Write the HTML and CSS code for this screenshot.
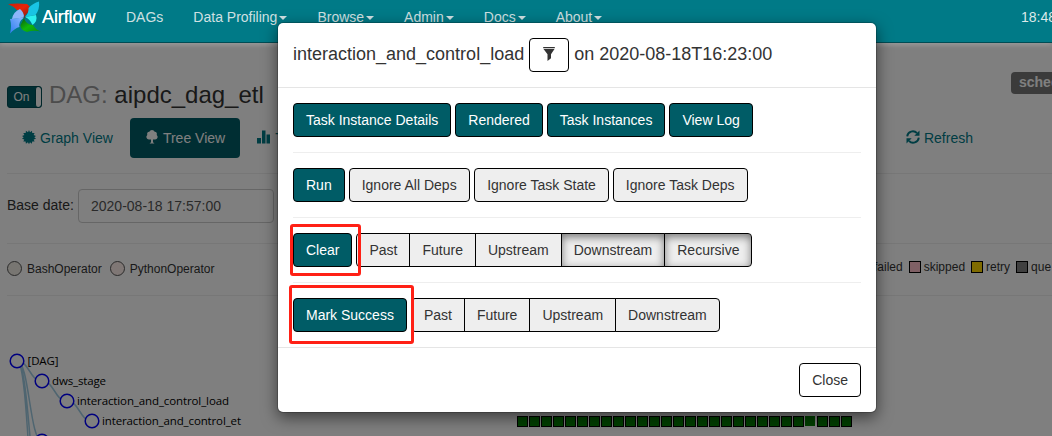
FILE: index.html
```html
<!DOCTYPE html>
<html lang="en">
<head>
<meta charset="utf-8">
<title>Airflow - DAG aipdc_dag_etl</title>
<link rel="stylesheet" href="styles.css">
</head>
<body>
<div class="page">
  <nav class="navbar">
    <a class="brand">
      <svg class="logo" width="34" height="34" viewBox="0 0 34 34">
        <defs>
          <linearGradient id="gr" x1="0" y1="0" x2="1" y2="1"><stop offset="0" stop-color="#c8200c"/><stop offset=".5" stop-color="#e82408"/><stop offset="1" stop-color="#7c1a18"/></linearGradient>
          <linearGradient id="gg" x1="0" y1="0" x2="1" y2="1"><stop offset="0" stop-color="#0b5a10"/><stop offset=".5" stop-color="#10b80c"/><stop offset="1" stop-color="#0a8a10"/></linearGradient>
          <linearGradient id="gb" x1="1" y1="0" x2="0" y2="1"><stop offset="0" stop-color="#8cb8ff"/><stop offset="1" stop-color="#2f7df0"/></linearGradient>
        </defs>
        <path fill="url(#gr)" d="M1 4Q10 3 20 4Q24 7 23 10L17 17Q16 9 10 10Q6 6 1 4Z"/>
        <path fill="#19c4e4" d="M32 1.500Q33 9 28.500 15L18 17Q22 13 21.500 8Q26 3 32 1.500Z"/>
        <path fill="#2cf0ee" d="M18 17L29 15Q31 21 25.500 25Q23 19 18 17Z"/>
        <path fill="url(#gg)" d="M34 31.500Q26 30 20 32Q13 30 13.500 25L17 18Q19 25 26 25Q29 30 34 31.500Z"/>
        <path fill="url(#gb)" d="M3 33.500Q5 26 3 19L17 17.500Q11 22 12.500 27Q8 28 3 33.500Z"/>
        <path fill="#8db6fa" d="M17 17.500L5 19Q6 12 13 9Q17 12 17 17.500Z"/>
        <circle cx="17.500" cy="17.300" r="1" fill="#444"/>
      </svg>
      <span>Airflow</span>
    </a>
    <a class="nav-link">DAGs</a>
    <a class="nav-link">Data Profiling<i class="caret"></i></a>
    <a class="nav-link">Browse<i class="caret"></i></a>
    <a class="nav-link">Admin<i class="caret"></i></a>
    <a class="nav-link">Docs<i class="caret"></i></a>
    <a class="nav-link">About<i class="caret"></i></a>
    <span class="clock">18:48</span>
  </nav>

  <main class="content">
    <header class="dag-head">
      <span class="toggle"><span class="toggle-on">On</span><span class="toggle-knob"></span></span>
      <h3 class="dag-title"><span class="muted">DAG:</span> aipdc_dag_etl</h3>
      <span class="schedule">sched</span>
    </header>
    <div class="pills">
      <a class="pill">
        <svg width="14" height="14" viewBox="0 0 14 14"><path fill="currentColor" d="M7 0l1 2.200L10 .7l.2 2.400 2.400-.2-1 2.200L14 6l-1.700 1.200L14 8.800l-2.300.6.9 2.200-2.400-.2-.3 2.400L8 12.300 7 14.200 5.900 12.300l-2 1.500-.3-2.400-2.300.2 1-2.200L0 8.800l1.700-1.600L0 6l2.400-.9-1.100-2.200 2.400.2L3.900.7 6 2.200z"/></svg>
        Graph View</a>
      <a class="pill active">
        <svg width="14" height="14" viewBox="0 0 14 14"><path fill="currentColor" d="M7 0a3 3 0 0 1 2.700 1.800 2.500 2.500 0 0 1 2 3.200 2.600 2.600 0 0 1-1.500 4.600H8v2.600l1.500 1.300h-5L6 12.200V9.600H3.900A2.600 2.600 0 0 1 2.300 5a2.500 2.500 0 0 1 2-3.200A3 3 0 0 1 7 0z"/></svg>
        Tree View</a>
      <a class="pill">
        <svg width="14" height="14" viewBox="0 0 14 14"><path fill="currentColor" d="M0 8h4v5.500H0zM5 .5h3.500v13H5zM9.500 4.500h3.500v9H9.500z"/></svg>
        T</a>
      <a class="refresh">
        <svg width="14" height="14" viewBox="0 0 14 14"><path fill="none" stroke="currentColor" stroke-width="1.900" d="M1.200 6.300A5.600 5.600 0 0 1 11 3.200M12.800 7.700A5.600 5.600 0 0 1 3 10.800"/><path fill="currentColor" d="M13.500.5v5.200H8.300zM.5 13.500V8.300h5.200z"/></svg>
        Refresh</a>
    </div>
    <form class="filters">
      <label>Base date:</label>
      <span class="input">2020-08-18 17:57:00</span>
    </form>
    <div class="legend">
      <span class="op"><i class="dot bash"></i>BashOperator</span>
      <span class="op"><i class="dot python"></i>PythonOperator</span>
      <div class="states">
        <span>failed</span>
        <span><i class="state skipped"></i>skipped</span>
        <span><i class="state retry"></i>retry</span>
        <span><i class="state queued"></i>que</span>
      </div>
    </div>
    <svg class="tree" width="1045" height="140" viewBox="7 296 1045 140">
      <g class="links">
        <path d="M17 361C29.500 361 29.500 381 42 381M42 381C54.500 381 54.500 401 67 401M67 401C79.500 401 79.500 421 92 421M17 361C29.500 361 29.500 441 42 441M17 361C29.500 361 29.500 501 42 501M17 361C29.500 361 29.500 561 42 561"/>
      </g>
      <g class="nodes">
        <circle cx="17" cy="361" r="6.800"/><circle cx="42" cy="381" r="6.800"/><circle cx="67" cy="401" r="6.800"/><circle cx="92" cy="421" r="6.800"/><circle cx="42" cy="441" r="6.800"/>
      </g>
      <g class="labels">
        <text x="27.500" y="365" textLength="31">[DAG]</text>
        <text x="52" y="385" textLength="54">dws_stage</text>
        <text x="77" y="405" textLength="152">interaction_and_control_load</text>
        <text x="102" y="425" textLength="139">interaction_and_control_et</text>
      </g>
      <g class="runs" id="runs"></g>
    </svg>
  </main>

  <div class="backdrop"></div>

  <section class="modal">
    <header class="modal-head">
      <span>interaction_and_control_load</span>
      <button class="btn plain filter"><svg width="14" height="14" viewBox="0 0 14 14"><path fill="currentColor" d="M1.200 0h11.600v1.300H1.200zM1.500 2h11L9 7.300V11.200L5.500 14V7.300z"/></svg></button>
      <span>on 2020-08-18T16:23:00</span>
    </header>
    <div class="modal-body">
      <div class="row">
        <button class="btn primary">Task Instance Details</button>
        <button class="btn primary">Rendered</button>
        <button class="btn primary">Task Instances</button>
        <button class="btn primary">View Log</button>
      </div>
      <hr>
      <div class="row">
        <button class="btn primary">Run</button>
        <button class="btn wide">Ignore All Deps</button>
        <button class="btn">Ignore Task State</button>
        <button class="btn">Ignore Task Deps</button>
      </div>
      <hr>
      <div class="row">
        <span class="marked"><button class="btn primary">Clear</button><i class="mark mark-clear"></i></span>
        <div class="group">
          <button class="btn">Past</button><button class="btn">Future</button><button class="btn">Upstream</button><button class="btn pressed">Downstream</button><button class="btn pressed">Recursive</button>
        </div>
      </div>
      <hr>
      <div class="row">
        <span class="marked"><button class="btn primary">Mark Success</button><i class="mark mark-success"></i></span>
        <div class="group">
          <button class="btn">Past</button><button class="btn">Future</button><button class="btn">Upstream</button><button class="btn">Downstream</button>
        </div>
      </div>
    </div>
    <footer class="modal-foot"><button class="btn plain">Close</button></footer>
  </section>
</div>
<script src="runs.js"></script>
</body>
</html>
```
FILE: styles.css
```css
* { box-sizing: border-box; }
body { margin: 0; font: 14px/20px "Liberation Sans", Arial, sans-serif; color: #333; background: #fff; }
.page { position: relative; width: 1052px; height: 436px; overflow: hidden; }

.navbar { position: relative; z-index: 2; display: flex; height: 43px; padding-left: 7px; background: #007a87; border-bottom: 1px solid #004c54; box-shadow: 0 2px 5px rgba(255,255,255,.22); white-space: nowrap; }
.brand { display: flex; width: 104px; color: #fff; font-size: 18px; line-height: 34px; text-shadow: 0 0 .5px #fff; }
.brand span { margin-left: 1px; letter-spacing: -.1px; }
.logo { flex: none; }
.nav-link { display: flex; padding: 7px 15px; color: #cfe0e2; }
.caret { width: 8px; height: 4px; margin: 9px 0 0 2px; border: 4px solid transparent; border-top-color: #cfe0e2; border-bottom: 0; }
.clock { margin: 7px -4px 0 auto; color: #dce9ea; }

.content { padding-left: 7px; }
.dag-head { display: flex; height: 75px; padding-top: 38px; }
.dag-title { margin: 0 0 0 7px; font-size: 24px; line-height: 27px; font-weight: 400; color: #333; }
.muted { color: #999; }
.toggle { display: flex; width: 35px; height: 22px; margin-top: 5px; border: 1px solid #004c54; border-radius: 3px; background: #005c66; overflow: hidden; }
.toggle-on { width: 27px; color: #fff; font-size: 12px; text-align: center; }
.toggle-knob { flex: 1; background: #fff; border: 1px solid #004c54; border-width: 0 0 0 1px; border-radius: 3px; }
.schedule { margin-left: auto; height: 22px; width: 41px; margin-top: -9px; padding: 0 8px; overflow: hidden; border-radius: 4px 0 0 4px; background: #777; color: #fff; font-size: 14px; font-weight: 700; }
.pills { display: flex; height: 56px; border-bottom: 1px solid #eee; color: #007a87; white-space: nowrap; }
.pill, .refresh { display: flex; gap: 4px; height: 40px; padding: 10px 15px; }
.pill svg, .refresh svg { margin-top: 2px; }
.pill { margin-right: 2px; }
.active { border-radius: 4px; color: #fff; background: #005c66; }
.refresh { margin: 0 64px 0 auto; color: #007a87; }
.filters { display: flex; gap: 4px; height: 70px; padding-top: 15px; border-bottom: 1px solid #eee; }
.filters label { width: 67px; padding-top: 6px; white-space: nowrap; }
.input { width: 196px; height: 34px; padding: 6px 12px; border: 1px solid #ccc; border-radius: 4px; color: #555; }
.legend { display: flex; height: 52px; align-items: center; border-bottom: 1px solid #eee; font-size: 12px; }
.op { display: flex; align-items: center; gap: 5px; margin: -2px 8px 0 0; }
.dot { width: 15px; height: 15px; border: 1px solid #555; border-radius: 50%; }
.bash { background: #f0ede4; }
.python { background: #ffefeb; }
.states { display: flex; width: 178px; gap: 6px; margin-left: auto; margin-top: -5px; white-space: nowrap; }
.states span { display: flex; align-items: center; gap: 3px; }
.state { width: 12px; height: 12px; border: 1px solid #000; }
.skipped { background: pink; }
.retry { background: gold; }
.queued { background: gray; }
.tree { display: block; }
.links { fill: none; stroke: #9ecae1; stroke-width: 1.5; }
.nodes { fill: #fff; stroke: blue; stroke-width: 1.5; }
.labels { font: 11.5px "Open Sans", "Noto Sans", sans-serif; fill: #000; }
.runs rect { fill: green; stroke: #000; }
.runs .plain-run { stroke: none; }
.backdrop { position: absolute; inset: 43px 0 0; background: rgba(0,0,0,.5); }

.modal { position: absolute; z-index: 3; left: 277px; top: 22px; width: 600px; background: #fff; background-clip: padding-box; border: 1px solid rgba(0,0,0,.2); border-radius: 6px; box-shadow: 0 5px 15px rgba(0,0,0,.5); }
.modal-head { display: flex; gap: 5px; height: 65px; padding: 15px; border-bottom: 1px solid #e5e5e5; font-size: 18px; line-height: 32px; white-space: nowrap; }
.modal-body { padding: 15px; }
.modal-foot { display: flex; justify-content: flex-end; padding: 15px; border-top: 1px solid #e5e5e5; }
.row { display: flex; gap: 4px; }
hr { margin: 15px 0; border: 0; border-top: 1px solid #eee; }
.btn { height: 34px; padding: 6px 12px; border: 1px solid #000; border-radius: 4px; background: #eee; color: #333; font: 14px/20px "Liberation Sans", Arial, sans-serif; white-space: nowrap; }
.primary { background: #005c66; color: #fff; }
.plain { background: #fff; }
.wide { padding-right: 12.5px; }
.filter { width: 40px; }
.filter svg { display: block; margin-top: -2px; }
.group { display: flex; }
.group .btn { border-radius: 0; }
.group .btn + .btn { margin-left: -1px; }
.group .btn:first-child { border-radius: 4px 0 0 4px; }
.group .btn:last-child { border-radius: 0 4px 4px 0; }
.group .pressed { box-shadow: inset 0 3px 8px rgba(0,0,0,.5); }
.marked { position: relative; }
.mark { position: absolute; z-index: 1; border: 3px solid #ff2015; border-radius: 3px; }
.mark-clear { inset: -9px -9px -9px -3px; }
.mark-success { inset: -13px -7px -12px -4px; }
```
FILE: runs.js
```js
const runs = document.getElementById("runs");
for (let i = 0; i < 28; i++) {
  const rect = document.createElementNS("http://www.w3.org/2000/svg", "rect");
  const bare = i === 24;
  rect.setAttribute("x", 517 + i * 12 + (bare ? 0 : 0.5));
  rect.setAttribute("y", bare ? 416 : 416.5);
  rect.setAttribute("width", 10);
  rect.setAttribute("height", 10);
  if (bare) rect.setAttribute("class", "plain-run");
  runs.appendChild(rect);
}
```
